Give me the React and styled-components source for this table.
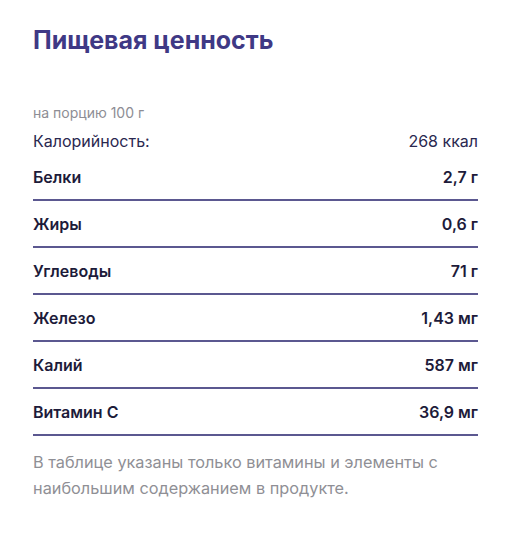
import styled, { createGlobalStyle } from "styled-components";

const Global = createGlobalStyle`
  body {
    margin: 0;
    background: #ffffff;
    font-family: "Inter", "Noto Sans", sans-serif;
  }
`;

const Wrap = styled.section`
  padding: 24px 34px 0 33px;
  color: #1d1b3a;
`;

const Title = styled.h2`
  margin: 0;
  font-size: 25px;
  font-weight: 700;
  line-height: 32px;
  color: #3f3985;
`;

const Portion = styled.div`
  margin-top: 48px;
  font-size: 14px;
  line-height: 18px;
  color: #8d8d94;
`;

const Calories = styled.div`
  display: flex;
  justify-content: space-between;
  margin-top: 9px;
  font-size: 16px;
  line-height: 20px;
  color: #2a2850;
`;

const Table = styled.div`
  margin-top: 3px;
`;

const Row = styled.div`
  display: flex;
  justify-content: space-between;
  align-items: center;
  height: 45px;
  border-bottom: 2px solid #5b5890;
  font-size: 16px;
  font-weight: 600;
  color: #1d1b3a;
`;

const Note = styled.p`
  margin: 13px 0 0;
  font-size: 16.3px;
  line-height: 26px;
  color: #8f8f95;
`;

const rows = [
  ["Белки", "2,7 г"],
  ["Жиры", "0,6 г"],
  ["Углеводы", "71 г"],
  ["Железо", "1,43 мг"],
  ["Калий", "587 мг"],
  ["Витамин C", "36,9 мг"],
];

function App() {
  return (
    <Wrap>
      <Global />
      <Title>Пищевая ценность</Title>
      <Portion>на порцию 100 г</Portion>
      <Calories>
        <span>Калорийность:</span>
        <span>268 ккал</span>
      </Calories>
      <Table>
        {rows.map(([name, value]) => (
          <Row key={name}>
            <span>{name}</span>
            <span>{value}</span>
          </Row>
        ))}
      </Table>
      <Note>
        В таблице указаны только витамины и элементы с<br />
        наибольшим содержанием в продукте.
      </Note>
    </Wrap>
  );
}

export default App;
